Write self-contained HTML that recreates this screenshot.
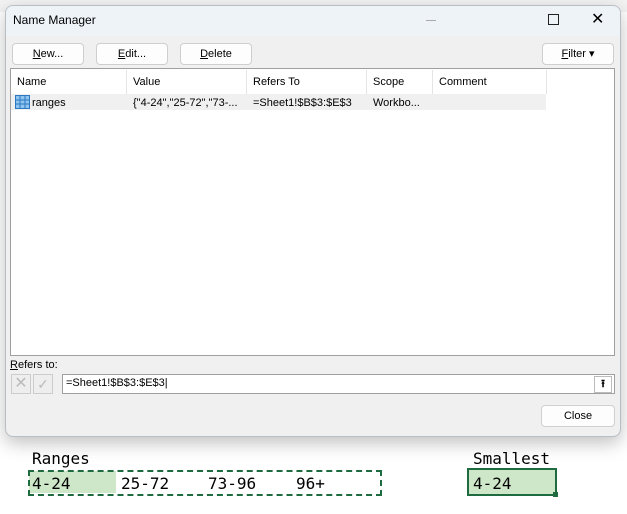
<!DOCTYPE html>
<html><head><style>
body{margin:0;width:627px;height:514px;background:#fff;position:relative;overflow:hidden;font-family:"Liberation Sans",sans-serif;font-size:11px;color:#000}
.a{position:absolute}
.dlg{left:5px;top:5px;width:614px;height:430px;background:#f0f0f0;border:1px solid #b9bec4;border-radius:8px;box-shadow:0 6px 18px rgba(0,0,0,.25);overflow:hidden}
.tb{left:0;top:0;width:614px;height:30px;background:#eef3f8}
.btn{background:#fdfdfd;border:1px solid #cfcfcf;border-radius:4px;text-align:center;line-height:20px;height:20px}
.mono{font-family:"DejaVu Sans Mono","Liberation Mono",monospace;font-size:16px}
.hd{top:73px;color:#000}
.sep{top:70px;width:1px;height:24px;background:#e5e5e5}
</style></head><body>
<div class="a" style="left:0;top:0;width:627px;height:12px;background:#f3f3f3"></div>
<div class="a dlg">
 <div class="a tb"></div>
 <div class="a" style="left:7px;top:7px;font-size:12px">Name Manager</div>
 <div class="a" style="left:420px;top:14px;width:10px;height:1px;background:#aaa"></div>
 <div class="a" style="left:542px;top:8px;width:9px;height:9px;border:1px solid #222"></div>
 <div class="a" style="left:585px;top:3px;font-size:16px">✕</div>
</div>
<div class="a btn" style="left:12px;top:43px;width:70px"><u>N</u>ew...</div>
<div class="a btn" style="left:96px;top:43px;width:70px"><u>E</u>dit...</div>
<div class="a btn" style="left:180px;top:43px;width:70px"><u>D</u>elete</div>
<div class="a btn" style="left:542px;top:43px;width:70px"><u>F</u>ilter ▾</div>
<div class="a" style="left:10px;top:68px;width:603px;height:286px;background:#fff;border:1px solid #a0a0a0"></div>
<div class="a" style="left:11px;top:94px;width:535px;height:16px;background:#f0f0f0"></div>
<div class="a sep" style="left:126px"></div><div class="a sep" style="left:246px"></div><div class="a sep" style="left:366px"></div><div class="a sep" style="left:432px"></div><div class="a sep" style="left:546px"></div>
<div class="a hd" style="left:17px;top:76px">Name</div>
<div class="a hd" style="left:133px;top:76px">Value</div>
<div class="a hd" style="left:253px;top:76px">Refers To</div>
<div class="a hd" style="left:373px;top:76px">Scope</div>
<div class="a hd" style="left:439px;top:76px">Comment</div>
<svg class="a" style="left:15px;top:95px" width="15" height="14"><rect x=".5" y=".5" width="14" height="13" fill="#8fc3f0" stroke="#2b79c2"/><path d="M5 1v12M10 1v12M1 5h13M1 9h13" stroke="#2b79c2"/></svg>
<div class="a" style="left:32px;top:97px">ranges</div>
<div class="a" style="left:133px;top:97px">{"4-24","25-72","73-...</div>
<div class="a" style="left:253px;top:97px">=Sheet1!$B$3:$E$3</div>
<div class="a" style="left:373px;top:97px">Workbo...</div>
<div class="a" style="left:10px;top:359px"><u>R</u>efers to:</div>
<div class="a" style="left:11px;top:374px;width:18px;height:18px;border:1px solid #ccc;background:#eee;color:#bbb;font-size:16px;line-height:18px;text-align:center">✕</div>
<div class="a" style="left:33px;top:374px;width:18px;height:18px;border:1px solid #ccc;background:#eee;color:#bbb;font-size:14px;line-height:18px;text-align:center">✓</div>
<div class="a" style="left:62px;top:374px;width:551px;height:18px;background:#fff;border:1px solid #a0a0a0"></div>
<div class="a" style="left:66px;top:377px">=Sheet1!$B$3:$E$3|</div>
<div class="a" style="left:594px;top:376px;width:16px;height:15px;border:1px solid #bbb;background:#fff;text-align:center;font-weight:bold;font-size:11px;line-height:15px">⭱</div>
<div class="a btn" style="left:541px;top:405px;width:72px">Close</div>
<div class="a mono" style="left:32px;top:449px">Ranges</div>
<div class="a mono" style="left:473px;top:449px">Smallest</div>
<div class="a" style="left:29px;top:471px;width:87px;height:22px;background:#cde7c8"></div>
<div class="a" style="left:28px;top:470px;width:350px;height:22px;border:2px dashed #1e6b3f"></div>
<div class="a mono" style="left:32px;top:474px">4-24</div>
<div class="a mono" style="left:121px;top:474px">25-72</div>
<div class="a mono" style="left:208px;top:474px">73-96</div>
<div class="a mono" style="left:296px;top:474px">96+</div>
<div class="a" style="left:467px;top:468px;width:86px;height:24px;background:#cde7c8;border:2px solid #1e6b3f"></div>
<div class="a mono" style="left:473px;top:474px">4-24</div>
<div class="a" style="left:553px;top:492px;width:5px;height:5px;background:#1e6b3f"></div>
</body></html>
